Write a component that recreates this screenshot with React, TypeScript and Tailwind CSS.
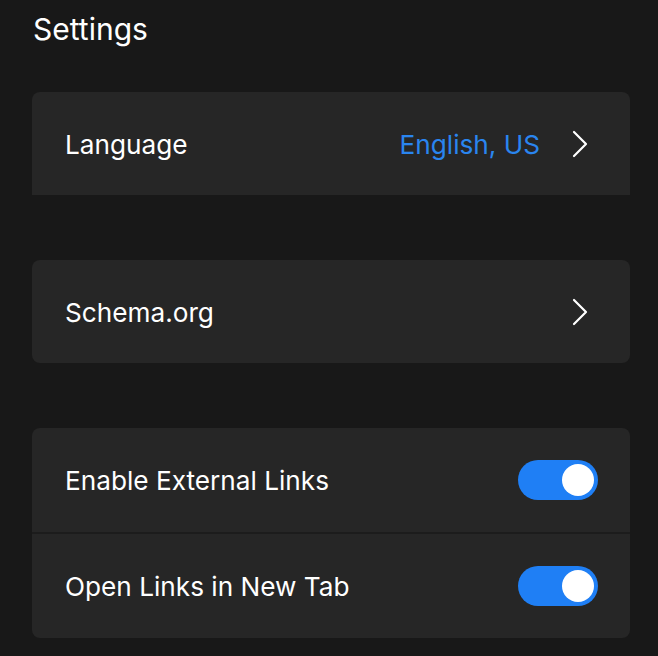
import React from 'react';

function Chevron() {
  return (
    <svg width="18" height="28" viewBox="0 0 18 28" fill="none" className="shrink-0">
      <path d="M3 2 L15 14 L3 26" stroke="#ffffff" strokeWidth="2.2" strokeLinecap="round" strokeLinejoin="round" />
    </svg>
  );
}

function Toggle() {
  return (
    <div className="w-[80px] h-[40px] rounded-full bg-[#1f7ff5] flex items-center justify-end pr-[4px]">
      <div className="w-[32px] h-[32px] rounded-full bg-white" />
    </div>
  );
}

export default function App() {
  return (
    <div className="w-[658px] h-[656px] bg-[#181818] text-white px-8 overflow-hidden" style={{ fontFamily: 'Inter, "Noto Sans", sans-serif' }}>
      <h1 className="text-[30px] leading-[36px] pt-[11px] pl-[1px] font-normal">Settings</h1>

      <div className="mt-[45px] w-[598px] h-[103px] bg-[#262626] rounded-t-lg flex items-center pl-[33px] pr-[41px]">
        <span className="text-[26.2px] leading-[32px] pt-[2px] flex-1">Language</span>
        <span className="text-[26.2px] leading-[32px] pt-[2px] text-[#2a85ef] mr-[31px]">English, US</span>
        <Chevron />
      </div>

      <div className="mt-[65px] w-[598px] h-[103px] bg-[#262626] rounded-lg flex items-center pl-[33px] pr-[41px]">
        <span className="text-[26.2px] leading-[32px] pt-[2px] flex-1">Schema.org</span>
        <Chevron />
      </div>

      <div className="mt-[65px] w-[598px] h-[210px] bg-[#262626] rounded-lg overflow-hidden flex flex-col">
        <div className="h-[106px] flex items-center pl-[33px] pr-[32px] border-b-2 border-[#1c1c1c]">
          <span className="text-[26.2px] leading-[32px] pt-[2px] flex-1">Enable External Links</span>
          <Toggle />
        </div>
        <div className="flex-1 flex items-center pl-[33px] pr-[32px]">
          <span className="text-[26.2px] leading-[32px] pt-[2px] flex-1">Open Links in New Tab</span>
          <Toggle />
        </div>
      </div>
    </div>
  );
}
